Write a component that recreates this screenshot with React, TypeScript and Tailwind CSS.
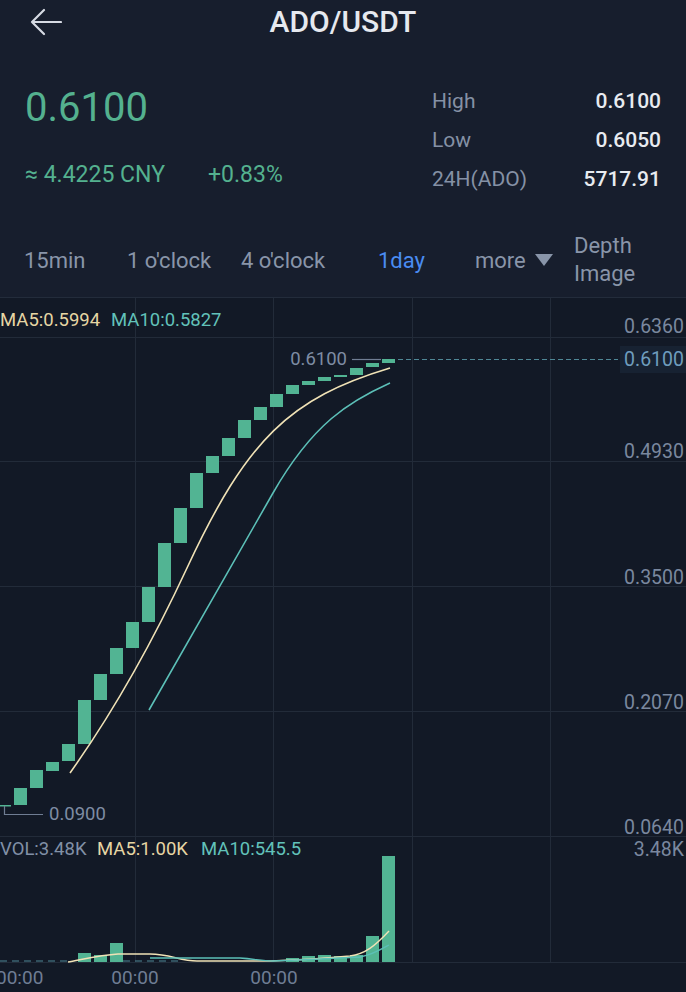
import React from "react";

const candles: [number, number, number][] = [
  [14, 788, 805],
  [30, 770, 788],
  [46, 762, 771],
  [62, 744, 761],
  [78, 700, 744],
  [94, 674, 700],
  [110, 648, 674],
  [126, 622, 648],
  [142, 587, 622],
  [158, 543, 587],
  [174, 508, 543],
  [190, 473, 508],
  [206, 456, 473],
  [222, 438, 456],
  [238, 420, 438],
  [254, 407, 420],
  [270, 394, 407],
  [286, 385, 394],
  [302, 381, 385],
  [318, 377, 381],
  [334, 375, 377],
  [350, 368, 375],
  [366, 363, 367],
  [382, 359, 363],
];

const vols: [number, number][] = [
  [78, 953],
  [94, 955],
  [110, 943],
  [286, 958],
  [302, 956],
  [318, 955],
  [334, 956],
  [350, 955],
  [366, 936],
  [382, 856],
];

const hLines = [337, 461, 586, 711, 836, 962];
const vLines = [135, 273, 412, 550];

const axis: [string, number][] = [
  ["0.6360", 326],
  ["0.4930", 451],
  ["0.3500", 577],
  ["0.2070", 702],
  ["0.0640", 827],
  ["3.48K", 849],
];

function Chart() {
  return (
    <svg width={686} height={694} viewBox="0 298 686 694" className="block">
      {hLines.map((y) => (
        <line key={y} x1={0} x2={686} y1={y + 0.5} y2={y + 0.5} stroke="#222b39" strokeWidth={1} />
      ))}
      {vLines.map((x) => (
        <line key={x} x1={x + 0.5} x2={x + 0.5} y1={298} y2={962} stroke="#222b39" strokeWidth={1} />
      ))}

      {/* legend */}
      <text x={0} y={320} dominantBaseline="central" fontSize={18.5} fill="#e6d6a4">
        MA5:0.5994
      </text>
      <text x={111} y={320} dominantBaseline="central" fontSize={18.5} fill="#62c2ba">
        MA10:0.5827
      </text>

      {/* candles */}
      <rect x={-2} y={805} width={13} height={1.5} fill="#52b493" />
      {candles.map(([x, t, b]) => (
        <rect key={x} x={x} y={t} width={13} height={Math.max(b - t, 1.5)} fill="#52b493" />
      ))}

      {/* MA lines */}
      <path
        d="M70,773 C109,718 148,652 187,568 C247,439 290,398 390,368"
        fill="none"
        stroke="#f0e2b6"
        strokeWidth={1.6}
      />
      <path d="M149,710 L273,493 C313,423 350,401 390,383" fill="none" stroke="#5cc0b8" strokeWidth={1.6} />

      {/* min marker */}
      <path d="M4.5,806 V814.5 H43" fill="none" stroke="#6f7d93" strokeWidth={1.2} />
      <text x={49} y={814} dominantBaseline="central" fontSize={18.5} fill="#7e8ca3">
        0.0900
      </text>

      {/* max marker */}
      <text x={347} y={359} dominantBaseline="central" textAnchor="end" fontSize={18.5} fill="#7e8ca3">
        0.6100
      </text>
      <line x1={352} x2={381} y1={359.5} y2={359.5} stroke="#6f7d93" strokeWidth={1.2} />

      {/* last price dashed line */}
      <line x1={398} x2={618} y1={359.5} y2={359.5} stroke="#4f8796" strokeWidth={1.2} strokeDasharray="5 3" />
      <rect x={620} y={346} width={66} height={27} fill="#172232" />
      <text x={684} y={359} dominantBaseline="central" textAnchor="end" fontSize={19.5} fill="#6f9dbd">
        0.6100
      </text>

      {/* right axis */}
      {axis.map(([t, y]) => (
        <text key={t} x={684} y={y} dominantBaseline="central" textAnchor="end" fontSize={19.5} fill="#7a889f">
          {t}
        </text>
      ))}

      {/* volume legend */}
      <text x={0} y={849} dominantBaseline="central" fontSize={18.5} fill="#8190a6">
        VOL:3.48K
      </text>
      <text x={97} y={849} dominantBaseline="central" fontSize={18.5} fill="#e6d6a4">
        MA5:1.00K
      </text>
      <text x={201} y={849} dominantBaseline="central" fontSize={18.5} fill="#62c2ba">
        MA10:545.5
      </text>

      {/* volume bars */}
      {vols.map(([x, t]) => (
        <rect key={x} x={x} y={t} width={13} height={962 - t} fill="#52b493" />
      ))}
      <line x1={0} x2={68} y1={961} y2={961} stroke="#4f8796" strokeWidth={1.2} strokeDasharray="7 5" />
      <line x1={123} x2={180} y1={961} y2={961} stroke="#4f8796" strokeWidth={1.2} strokeDasharray="7 5" />
      <path
        d="M68,962 C80,960 100,955 118,954 L150,954 C170,954 180,961 197,961 L271,961 C300,960 330,958 350,956 C365,954 375,946 389,931"
        fill="none"
        stroke="#f0e2b6"
        strokeWidth={1.4}
      />
      <path
        d="M150,958 L240,958 C255,959 262,961 273,961 C300,960 340,958 360,957 C372,955 380,950 389,945"
        fill="none"
        stroke="#5cc0b8"
        strokeWidth={1.4}
      />

      {/* time labels */}
      <text x={-4} y={977} dominantBaseline="central" fontSize={19} fill="#6f7d94">
        00:00
      </text>
      <text x={135} y={977} dominantBaseline="central" textAnchor="middle" fontSize={19} fill="#6f7d94">
        00:00
      </text>
      <text x={274} y={977} dominantBaseline="central" textAnchor="middle" fontSize={19} fill="#6f7d94">
        00:00
      </text>
    </svg>
  );
}

export default function App() {
  return (
    <div
      className="w-[686px] h-[992px] overflow-hidden bg-[#121926]"
      style={{ fontFamily: "Roboto, 'Noto Sans', sans-serif" }}
    >
      <div className="h-[298px] bg-[#171e2d] border-b border-[#232c3b] flex flex-col">
        {/* title bar */}
        <div className="h-[44px] grid grid-cols-[1fr_auto_1fr] items-center">
          <div className="pl-[30px] flex items-center">
            <svg width="32" height="28" viewBox="0 0 32 28">
              <path d="M14 2 L2 14 L14 26 M2 14 H31" fill="none" stroke="#d6dae3" strokeWidth="2.2" strokeLinecap="round" strokeLinejoin="round" />
            </svg>
          </div>
          <div className="text-[30px] font-medium text-[#e6e9ef] leading-none">ADO/USDT</div>
          <div />
        </div>

        {/* price section */}
        <div className="mt-[38px] flex justify-between px-[25px]">
          <div className="flex flex-col">
            <div className="text-[40px] leading-[52px] text-[#54b18f]">0.6100</div>
            <div className="mt-[26px] flex text-[23px] leading-[30px] text-[#54b18f]">
              <span className="w-[183px]">≈ 4.4225 CNY</span>
              <span>+0.83%</span>
            </div>
          </div>
          <div className="w-[229px] flex flex-col">
            {[
              ["High", "0.6100"],
              ["Low", "0.6050"],
              ["24H(ADO)", "5717.91"],
            ].map(([l, v]) => (
              <div key={l} className="h-[39px] flex items-center justify-between">
                <span className="text-[21px] text-[#8591a5]">{l}</span>
                <span className="text-[21px] font-medium text-[#e8ebf0]">{v}</span>
              </div>
            ))}
          </div>
        </div>

        {/* tabs */}
        <div className="mt-[33px] h-[56px] flex items-center pl-[24px] text-[22px] text-[#8995a9]">
          <div className="w-[103px]">15min</div>
          <div className="w-[114px]">1 o'clock</div>
          <div className="w-[137px]">4 o'clock</div>
          <div className="w-[97px] text-[#4a8cf2]">1day</div>
          <div className="w-[99px] flex items-center gap-[9px]">
            <span>more</span>
            <svg width="18" height="12" viewBox="0 0 18 12">
              <path d="M0 0 H18 L9 12 Z" fill="#8995a9" />
            </svg>
          </div>
          <div className="flex flex-col leading-[28px]">
            <span>Depth</span>
            <span>Image</span>
          </div>
        </div>
      </div>

      <Chart />
    </div>
  );
}
